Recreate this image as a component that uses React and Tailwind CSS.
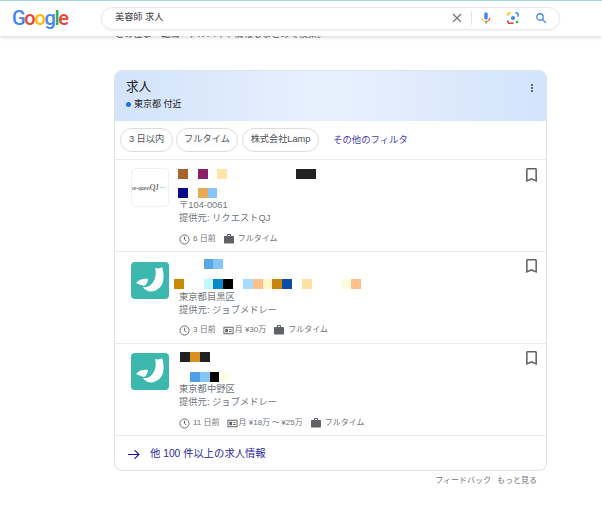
const JOBS = [
  {
    logo: 'qj',
    logoClass: 'mt-[8px]',
    colClass: 'pt-[9px]',
    blockClass: 'h-[30px] gap-[9px] ml-0',
    metaClass: 'mt-[7px]',
    top: ['#a8622a', null, '#8a2068', null, '#fde6a8', null, null, null, null, null, null, null, '#222222', '#222222'],
    bottom: ['#0a0a8c', null, '#e8aa55', '#85c5fa'],
    place: '〒104-0061',
    source: '提供元: リクエストQJ',
    age: '6 日前',
    bookmarkClass: 'mt-[8px]',
  },
  {
    logo: 'j',
    logoClass: 'mt-[10px]',
    colClass: 'pt-[7px]',
    blockClass: 'h-[32px] gap-[10px] -ml-[4px]',
    metaClass: 'mt-[6px]',
    top: [null, null, null, '#5aa5e8', '#85c5fa'],
    bottom: ['#c8890a', null, null, '#c4f6ff', '#0a88cc', '#000000', null, '#a8dcff', '#fcc088', '#fff5c8', '#c8860a', '#0a4ca8', null, '#ffe0a0', null, null, null, '#fffae0', '#fcc088'],
    place: '東京都目黒区',
    source: '提供元: ジョブメドレー',
    age: '3 日前',
    pay: '月 ¥30万',
    bookmarkClass: 'mt-[7px]',
  },
  {
    logo: 'j',
    logoClass: 'mt-[9px]',
    colClass: 'pt-[8px]',
    blockClass: 'h-[31px] gap-[10px] ml-[2px]',
    metaClass: 'mt-[7px]',
    top: ['#222222', '#d8901f', '#222222'],
    bottom: [null, '#4ea0e8', '#85c5fa', '#000000', '#fffee8'],
    place: '東京都中野区',
    source: '提供元: ジョブメドレー',
    age: '11 日前',
    pay: '月 ¥18万\u2009～\u2009¥25万',
    bookmarkClass: 'mt-[7px]',
  },
]

function Mosaic({ cells }) {
  return (
    <div className="flex h-[10px]">
      {cells.map((color, i) => (
        <span key={i} className="w-[9.85px] h-full shrink-0" style={{ backgroundColor: color ?? 'transparent' }} />
      ))}
    </div>
  )
}

function ClockIcon() {
  return (
    <svg viewBox="0 0 24 24" className="w-[11px] h-[11px] shrink-0" fill="none" stroke="#5f6368" strokeWidth="2">
      <circle cx="12" cy="12" r="10" />
      <path d="M12 6v6.5l4 2.5" />
    </svg>
  )
}

function WorkIcon() {
  return (
    <svg viewBox="0 0 24 24" className="w-[12px] h-[12px] shrink-0" fill="#5f6368">
      <path d="M20 6h-4V4c0-1.11-.89-2-2-2h-4c-1.11 0-2 .89-2 2v2H4c-1.11 0-1.99.89-1.99 2L2 19c0 1.11.89 2 2 2h16c1.11 0 2-.89 2-2V8c0-1.11-.89-2-2-2zm-6 0h-4V4h4v2z" />
    </svg>
  )
}

function MoneyIcon() {
  return (
    <svg viewBox="0 0 24 24" className="w-[11px] h-[11px] shrink-0" fill="#5f6368">
      <path fillRule="evenodd" d="M1 4h22v16H1zM3 6v12h18V6zM5 8h6v8H5zM13 9h6v2h-6zM13 13h6v2h-6z" />
    </svg>
  )
}

function BookmarkIcon() {
  return (
    <svg viewBox="5 3 14 18" className="w-[11px] h-[14px]" fill="#5f6368">
      <path d="M17 3H7c-1.1 0-1.99.9-1.99 2L5 21l7-3 7 3V5c0-1.1-.9-2-2-2zm0 15l-5-2.18L7 18V5h10v13z" />
    </svg>
  )
}

function JobLogo({ kind, className }) {
  if (kind === 'qj') {
    return (
      <div className={`w-[38px] h-[39px] shrink-0 rounded-sm border border-[#f1f1f1] bg-white flex items-center overflow-hidden ${className}`}>
        <span className="font-['Liberation_Serif',serif] text-[5.5px] leading-none text-[#333333] whitespace-nowrap">
          re-quest<span className="text-[8px]">QJ</span>
        </span>
        <span className="ml-px w-[6px] h-px bg-[#bfe6e4]" />
      </div>
    )
  }
  return (
    <div className={`w-[38px] h-[37px] shrink-0 rounded-sm bg-[#3cb8ae] ${className}`}>
      <svg viewBox="0 0 38 37" className="w-full h-full" fill="#ffffff">
        <path d="M24 6C27 7 30 6 31 5C34 14 33 23 27 27C22 31 15 30 12 25C18 26 22 22 24 16C25 12 25 9 24 6Z" />
        <path d="M5 21C8 17 13 16 17 17C17 20 15 23 13 24C10 23 7 22 5 21Z" />
      </svg>
    </div>
  )
}

function JobRow({ job }) {
  return (
    <div className="h-[92px] border-b border-[#e8eaed] pl-[16px] pr-[9px] flex items-start">
      <JobLogo kind={job.logo} className={job.logoClass} />
      <div className={`ml-[9px] flex-1 min-w-0 ${job.colClass}`}>
        <div className={`flex flex-col ${job.blockClass}`}>
          <Mosaic cells={job.top} />
          <Mosaic cells={job.bottom} />
        </div>
        <div className="pl-px text-[9.3px] leading-[13px] text-[#70757a]">{job.place}</div>
        <div className="pl-px text-[9.3px] leading-[13px] text-[#70757a]">{job.source}</div>
        <div className={`pl-px flex items-center h-[14px] text-[8px] text-[#70757a] ${job.metaClass}`}>
          <ClockIcon />
          <span className="ml-[3px]">{job.age}</span>
          {job.pay && (
            <>
              <span className="ml-[7px]"><MoneyIcon /></span>
              <span className="ml-px">{job.pay}</span>
            </>
          )}
          <span className="ml-[7px]"><WorkIcon /></span>
          <span className="ml-[3px]">フルタイム</span>
        </div>
      </div>
      <div className={job.bookmarkClass}>
        <BookmarkIcon />
      </div>
    </div>
  )
}

function Chip({ children, className }) {
  return (
    <span className={`h-[24px] flex items-center justify-center rounded-full border border-[#dadce0] text-[9.2px] text-[#4d5156] ${className}`}>
      {children}
    </span>
  )
}

function MicIcon() {
  return (
    <svg viewBox="0 0 24 24" className="w-[14px] h-[14px]" fill="none">
      <rect x="9" y="2" width="6" height="13" rx="3" fill="#4285f4" />
      <path d="M5.5 11.5c0 3.6 2.9 6.5 6.5 6.5" stroke="#fbbc04" strokeWidth="2" />
      <path d="M18.5 11.5c0 3.6-2.9 6.5-6.5 6.5" stroke="#ea4335" strokeWidth="2" />
      <path d="M12 18v4" stroke="#34a853" strokeWidth="2" />
    </svg>
  )
}

function LensIcon() {
  return (
    <svg viewBox="0 0 24 24" className="w-[14px] h-[14px]" fill="none" strokeWidth="2.6">
      <path d="M8 3H7a4 4 0 0 0-4 4v1" stroke="#fbbc04" />
      <path d="M3 16v1a4 4 0 0 0 4 4h6" stroke="#ea4335" />
      <path d="M16 3h1a4 4 0 0 1 4 4v3" stroke="#4285f4" />
      <circle cx="12" cy="12" r="3.6" fill="#4285f4" />
      <circle cx="19" cy="19" r="2.2" fill="#34a853" />
    </svg>
  )
}

export default function App() {
  return (
    <div className="min-h-[521px] bg-white font-['Liberation_Sans','Noto_Sans_CJK_JP',sans-serif]">
      {/* search bar sits over the scrolled page */}
      <header className="relative z-10 h-[36px] bg-white border-t border-[#a8d4d8] shadow-[0_1px_4px_rgba(0,0,0,0.18)] flex items-center">
        <div className="w-[101px] pl-[12px] font-['Roboto',sans-serif] font-medium text-[20px] leading-none tracking-[-1.3px] -mt-[1px]">
          <span className="text-[#4285f4]">G</span>
          <span className="text-[#ea4335]">o</span>
          <span className="text-[#fbbc04]">o</span>
          <span className="text-[#4285f4]">g</span>
          <span className="text-[#34a853]">l</span>
          <span className="text-[#ea4335]">e</span>
        </div>
        <div className="w-[459px] h-[23px] -mt-[1px] rounded-full border border-[#e6e8ea] shadow-[0_1px_2px_rgba(0,0,0,0.06)] flex items-center pl-[13px]">
          <span className="flex-1 text-[9.2px] text-[#3c4043]">美容師 求人</span>
          <svg viewBox="0 0 24 24" className="w-[12px] h-[12px]" fill="none" stroke="#70757a" strokeWidth="2.4">
            <path d="M4 4l16 16M20 4L4 20" />
          </svg>
          <span className="ml-[8px] w-px h-[14px] bg-[#e2e4e7]" />
          <span className="ml-[7px]"><MicIcon /></span>
          <span className="ml-[13px]"><LensIcon /></span>
          <svg viewBox="0 0 24 24" className="ml-[15px] mr-[12px] w-[12px] h-[12px]" fill="none" stroke="#4285f4" strokeWidth="2.6">
            <circle cx="10" cy="10" r="6.5" />
            <path d="M15 15l6.5 6.5" />
          </svg>
        </div>
      </header>

      <main className="pl-[114px] w-[547px]">
        <p className="-mt-[8px] pl-px h-[13px] text-[9.2px] leading-[13px] text-[#4d5156] whitespace-nowrap">
          この仕事・転職・アルバイト情報もまとめて検索。
        </p>

        <section className="mt-[29px] w-[433px] rounded-lg border border-[#e0e2e5] overflow-hidden bg-white">
          <div className="relative h-[50px] bg-gradient-to-r from-[#d3e3fb] via-[#e8f1fe] to-[#d3e3fb] pl-[11px] pt-[7px]">
            <div className="text-[12.6px] leading-[18px] text-[#202124]">求人</div>
            <div className="mt-[2px] flex items-center text-[9px] leading-[13px] text-[#202124]">
              <span className="w-[5px] h-[5px] rounded-full bg-[#1a73e8] mr-[3px]" />
              東京都 付近
            </div>
            <div className="absolute right-[13px] top-[13px] flex flex-col gap-px">
              <span className="w-[2px] h-[2px] rounded-full bg-[#3c4043]" />
              <span className="w-[2px] h-[2px] rounded-full bg-[#3c4043]" />
              <span className="w-[2px] h-[2px] rounded-full bg-[#3c4043]" />
            </div>
          </div>

          <div className="h-[39px] border-b border-[#e8eaed] pl-[5px] flex items-center">
            <Chip className="w-[53px]">3 日以内</Chip>
            <Chip className="w-[62px] ml-[3px]">フルタイム</Chip>
            <Chip className="w-[77px] ml-[4px]">株式会社Lamp</Chip>
            <span className="ml-[14px] text-[9.4px] text-[#4a40b0]">その他のフィルタ</span>
          </div>

          {JOBS.map((job, i) => (
            <JobRow key={i} job={job} />
          ))}

          <div className="h-[34px] pl-[12px] pt-[2px] flex items-center text-[10.3px] text-[#2a1fa0]">
            <svg viewBox="0 0 24 24" className="w-[13px] h-[13px]" fill="none" stroke="#1a0dab" strokeWidth="2">
              <path d="M2 12h20M14 4l8 8-8 8" />
            </svg>
            <span className="ml-[10px]">他 100 件以上の求人情報</span>
          </div>
        </section>

        <div className="mt-[4px] pr-[10px] flex justify-end gap-[6px] text-[8px] leading-[12px] text-[#70757a]">
          <span>フィードバック</span>
          <span>もっと見る</span>
        </div>
      </main>
    </div>
  )
}
